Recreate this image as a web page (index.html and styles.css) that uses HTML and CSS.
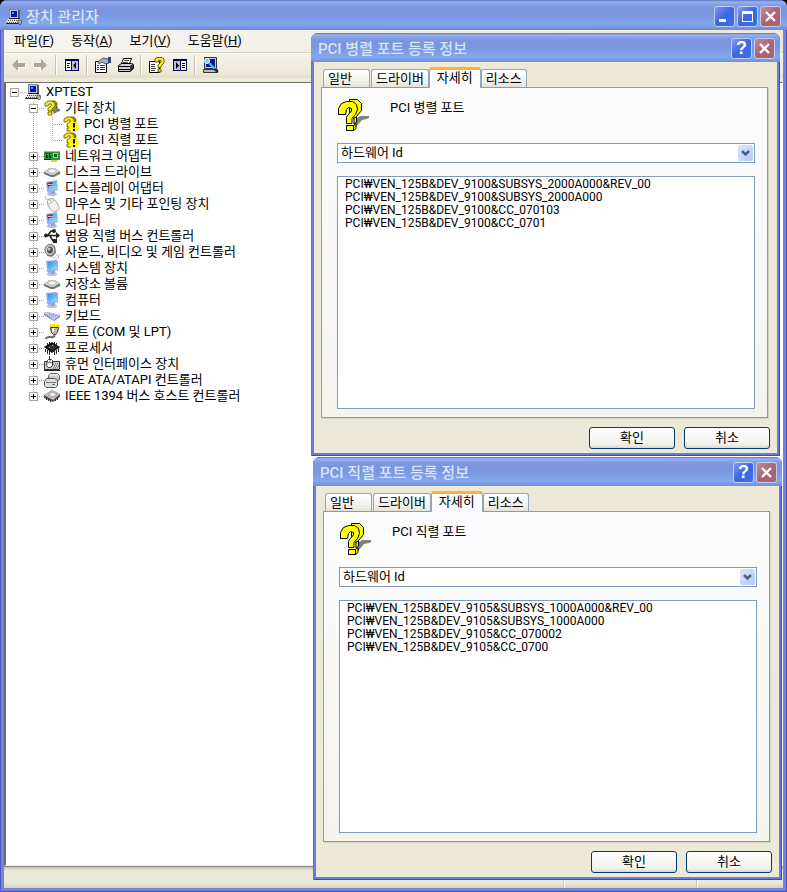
FILE: index.html
```html
<!DOCTYPE html>
<html lang="ko">
<head>
    <meta charset="UTF-8">
    <meta name="viewport" content="width=device-width, initial-scale=1.0">
    <title>장치 관리자</title>
    <link rel="stylesheet" href="styles.css">
</head>
<body>

<!-- 아이콘 모음 -->
<svg class="sprite" aria-hidden="true">
    <defs>
        <linearGradient id="screenFill" x1="0" y1="0" x2="1" y2="1">
            <stop offset="0" stop-color="#2a86ea"/>
            <stop offset=".5" stop-color="#5cbcf8"/>
            <stop offset="1" stop-color="#a8ecff"/>
        </linearGradient>
        <linearGradient id="metalFill" x1="0" y1="0" x2="0" y2="1">
            <stop offset="0" stop-color="#f4f4f4"/>
            <stop offset="1" stop-color="#9c9c9c"/>
        </linearGradient>
        <pattern id="hatch" width="2" height="2" patternUnits="userSpaceOnUse">
            <rect width="2" height="2" fill="#ffff00"/>
            <rect width="1" height="1" fill="#d8d8b0"/>
            <rect x="1" y="1" width="1" height="1" fill="#f0e890"/>
        </pattern>
    </defs>

    <symbol id="i-pc" viewBox="0 0 16 16">
        <path d="M3 0h10v10H3z" fill="#c8c8c8"/>
        <path d="M12 1h2v9h-2z" fill="#555"/>
        <path d="M3 0h10v1H3zM3 0h1v10H3z" fill="#888"/>
        <path d="M5 2h6v6H5z" fill="#0010c8"/>
        <path d="M6 3h2v2H6z" fill="#38a0ff"/>
        <path d="M3 9h11v1H3z" fill="#222"/>
        <path d="M2 10h12l1 3v1H0v-1z" fill="#e0e0e0"/>
        <path d="M2 11.5h10M1 13.500h11" stroke="#555" stroke-dasharray="1 1"/>
        <path d="M0 14h13v1H0z" fill="#222"/>
        <path d="M12 11h3l1 3-2 2-2-2z" fill="#aaa" stroke="#444" stroke-width=".7"/>
    </symbol>

    <symbol id="i-question" viewBox="0 0 16 16">
        <path d="M9 11l3-2V7h2v2h2v2l-3 1-3 2z" fill="#777"/>
        <path d="M8 1h3l2 2v4l-4 4H7z" fill="#a89800" stroke="#444000" stroke-width=".6"/>
        <path d="M1 6V3l3-2h4l3 2v3L8 9v2H4V8l3-2V4H5L4 6z" fill="#ffef00" stroke="#444000" stroke-width=".7"/>
        <path d="M4 12h4v3H4z" fill="#ffef00" stroke="#444000" stroke-width=".7"/>
    </symbol>

    <symbol id="i-warn" viewBox="0 0 16 16">
        <path d="M8 1h3l2 2v4l-4 4H7z" fill="#a89800" stroke="#444000" stroke-width=".6"/>
        <path d="M1 6V3l3-2h4l3 2v3L8 9v2H4V8l3-2V4H5L4 6z" fill="#ffe600" stroke="#444000" stroke-width=".7"/>
        <path d="M4 12h4v3H4z" fill="#ffef00" stroke="#444000" stroke-width=".7"/>
        <circle cx="11" cy="11" r="5" fill="#ffff00"/>
        <path d="M10 7h2v4l-1 1-1-1zM10 13h2v2h-2z" fill="#000"/>
    </symbol>

    <symbol id="i-net" viewBox="0 0 16 16">
        <path d="M0 4h16v8H0z" fill="#2a9636"/>
        <path d="M0 3h16v1H0z" fill="#8cc88c"/>
        <path d="M2 5h2v5H2zM5 5h2v5H5z" fill="#073f10"/>
        <path d="M3 6h1v1H3zM6 6h1v1H6z" fill="#8ecf8e"/>
        <path d="M9 5h5v5H9z" fill="#9cd49c"/>
        <path d="M10 6h3v3h-3z" fill="#0b5a18"/>
        <path d="M0 11h7v1H0z" fill="#063810"/>
        <path d="M7 12h6v2H7z" fill="#e8c840"/>
    </symbol>

    <symbol id="i-disk" viewBox="0 0 16 16">
        <path d="M0 8l5-4h6l5 4v2l-6 3H7L0 10z" fill="#6f6f6f"/>
        <path d="M0 8l5-4h6l5 3-6 4H7z" fill="#cfcfcf"/>
        <ellipse cx="8" cy="7" rx="4" ry="2" fill="#f8f8f8" stroke="#999" stroke-width=".5"/>
        <path d="M12 10h1v1h-1z" fill="#5b5"/>
    </symbol>

    <symbol id="i-display" viewBox="0 0 16 16">
        <ellipse cx="8" cy="14" rx="5" ry="2" fill="#b8c0e0"/>
        <path d="M7 11h4v3H7z" fill="#98a4cc"/>
        <path d="M2 2l11-2 1 10-9 3-2-1z" fill="#a4b0d8"/>
        <path d="M3 3l9-2 1 8-8 2z" fill="url(#screenFill)"/>
        <path d="M3 3l5-1 1 3-5 2z" fill="#1d50b8"/>
        <path d="M4 4h5v1H4zM5 6h4v1H5z" fill="#e8b4a0"/>
    </symbol>

    <symbol id="i-computer" viewBox="0 0 16 16">
        <ellipse cx="8" cy="14" rx="5" ry="2" fill="#b8c0e4"/>
        <path d="M7 11h4v3H7z" fill="#98a4d0"/>
        <path d="M2 1l10-1 2 1v9l-9 3-2-1z" fill="#98aae0"/>
        <path d="M4 2l8-1 1 8-8 2z" fill="url(#screenFill)"/>
    </symbol>

    <symbol id="i-mouse" viewBox="0 0 16 16">
        <path d="M2 0c-2 2 0 4 4 4" fill="none" stroke="#aaa"/>
        <path d="M4 4c3-3 7-1 9 3 2 3 3 6 0 8-3 1-6 0-8-4-2-3-2-5-1-7z" fill="#f2f2f2" stroke="#a0a0a0"/>
        <path d="M4 8c2 0 5-2 6-4M7 6L6 3" fill="none" stroke="#b8b8b8"/>
    </symbol>

    <symbol id="i-usb" viewBox="0 0 16 16">
        <path d="M2 7.500h11M4 7l3-4h3M6 8l3 5h3" fill="none" stroke="#222" stroke-width="1.600"/>
        <circle cx="2" cy="7.500" r="2" fill="#222"/>
        <path d="M12 4l4 3.500-4 3.500z" fill="#222"/>
        <circle cx="10" cy="3" r="2" fill="#222"/>
        <path d="M9 11h4v4H9z" fill="#222"/>
    </symbol>

    <symbol id="i-sound" viewBox="0 0 16 16">
        <path d="M2 2l5-2 4 2 1 7-4 4-5-1z" fill="#8a8a8a"/>
        <ellipse cx="6" cy="6" rx="5" ry="5.500" fill="#d4d4d4" stroke="#6a6a6a"/>
        <ellipse cx="6" cy="6" rx="3" ry="3.500" fill="#555"/>
        <circle cx="5" cy="5" r="1.500" fill="#ccc"/>
        <path d="M9 14c2 0 4-2 4-4M11 16c3-1 4-4 4-6" fill="none" stroke="#9aa6e8" stroke-width=".8"/>
    </symbol>

    <symbol id="i-keyboard" viewBox="0 0 16 16">
        <path d="M0 5l3-1 13 3v2l-6 4-2-1-8-5z" fill="#8088b8"/>
        <path d="M0 5l3-1 13 3-6 5-2-1z" fill="#c6ccf0"/>
        <path d="M3 6l9 3M3 8l7 2M5 5l9 3" stroke="#7078b0" stroke-width=".8" stroke-dasharray="1 1"/>
    </symbol>

    <symbol id="i-port" viewBox="0 0 16 16">
        <path d="M6 0h9v3H6z" fill="#f0e000"/>
        <path d="M7 0h1v1H7zM9 0h1v1H9zM11 0h1v1h-1zM13 0h1v1h-1z" fill="#fff"/>
        <path d="M6.500 3.500h8l-1 5-2 2h-2l-2-2z" fill="#b8b8b8" stroke="#333"/>
        <path d="M8 4h2v4H8z" fill="#f4f4f4"/>
        <path d="M10.500 11c0 3-3 2-5 2s-3 0-4 2" fill="none" stroke="#333" stroke-width="2"/>
        <path d="M10.500 11c0 3-3 2-5 2s-3 0-4 2" fill="none" stroke="#ddd" stroke-width=".7"/>
    </symbol>

    <symbol id="i-cpu" viewBox="0 0 16 16">
        <path d="M0 7l8-5 8 5-8 6z" fill="#111"/>
        <path d="M4 7l4-3 5 3-5 3z" fill="#333"/>
        <path d="M1.500 9v3M3.500 10v4M5.500 11v4M10.500 11v4M12.500 10v4M14.500 8v4M3.500 3v2M5.500 2v2M10.500 2v2M12.500 3v2" stroke="#222"/>
        <path d="M5 7h1v1H5zM8 5h1v1H8z" fill="#bbb"/>
    </symbol>

    <symbol id="i-hid" viewBox="0 0 16 16">
        <path d="M.5 5.500h15v8H.5z" fill="#ccc" stroke="#333"/>
        <path d="M9 8h6M10 10h5M9 12h6" stroke="#555" stroke-dasharray="1 1"/>
        <path d="M0 14h16v1H0z" fill="#222"/>
        <path d="M5.500 0v3M3.500 4.500l1-1h3l1 1v5l-2 2h-2l-2-2z" fill="#fff" stroke="#333"/>
        <path d="M4 6.500h4M6 4v2" stroke="#777"/>
    </symbol>

    <symbol id="i-ide" viewBox="0 0 16 16">
        <path d="M4.500 3.500l2-2h7l2 2v4l-2 2h-9z" fill="url(#metalFill)" stroke="#666"/>
        <path d="M.5 9.500l2-3h8l3 2v5l-2 2h-9l-2-2z" fill="#dedede" stroke="#555"/>
        <path d="M2 10h10v1H2z" fill="#777"/>
        <path d="M8 12h3v1H8z" fill="#484"/>
    </symbol>

    <symbol id="i-1394" viewBox="0 0 16 16">
        <path d="M0 7l8-5 8 4v3l-7 5-9-4z" fill="#555"/>
        <path d="M0 7l8-5 8 4-7 6z" fill="#c0c0c0"/>
        <path d="M4 7l4-3 5 2-4 3z" fill="#eee" stroke="#888" stroke-width=".7"/>
        <path d="M2.500 9v3M4.500 10v3M6.500 11v3M11.500 11v2M13.500 9v3" stroke="#333"/>
    </symbol>

    <symbol id="i-question-big" viewBox="0 0 32 32">
        <path d="M18 20l4-3h9v2l-2 1-5 1-6 7z" fill="#808080"/>
        <path d="M11.500.5h8l4 4v7l-5 6v2h-3l-4-6z" fill="url(#hatch)" stroke="#000"/>
        <path d="M16 19l2.500-1v5l-2.500 2z" fill="url(#hatch)" stroke="#000"/>
        <path d="M.5 15.500v-6l3-5 5-2h6l4 3 1 5-2 5-3.500 4v5H8.500v-6l1-2 4-4.500V9.500l-3-1-2 2-1 5z" fill="#ffff00" stroke="#000"/>
        <path d="M8.500 26.500h7v5h-7z" fill="#ffff00" stroke="#000"/>
        <path d="M15.500 26.500l2.500-2v5l-2.500 2z" fill="url(#hatch)" stroke="#000"/>
    </symbol>

    <symbol id="i-back" viewBox="0 0 16 16">
        <path d="M2 8l6-6v4h7v4H8v4z" fill="#fff" transform="translate(1 1)"/>
        <path d="M2 8l6-6v4h7v4H8v4z" fill="#aca899"/>
    </symbol>

    <symbol id="i-pane-left" viewBox="0 0 16 16">
        <path d="M1 2h14v12H1z" fill="#00005c"/>
        <path d="M2 4h5v9H2z" fill="#fff"/>
        <path d="M8 4h6v9H8z" fill="#c0c0cc"/>
        <path d="M3 6h3v1H3zM3 8h2v1H3zM3 10h3v1H3z" fill="#000"/>
        <path d="M12 5v7L9 8.500z" fill="#000"/>
    </symbol>

    <symbol id="i-pane-right" viewBox="0 0 16 16">
        <path d="M1 2h14v12H1z" fill="#00005c"/>
        <path d="M9 4h5v9H9z" fill="#fff"/>
        <path d="M2 4h6v9H2z" fill="#c0c0cc"/>
        <path d="M10 6h3v1h-3zM10 8h3v1h-3zM10 10h3v1h-3z" fill="#000"/>
        <path d="M4 5v7l3-3.500z" fill="#000"/>
    </symbol>

    <symbol id="i-props" viewBox="0 0 16 16">
        <path d="M.5 4.500h11v11H.5z" fill="#fff" stroke="#000"/>
        <path d="M2 8.500h2M5 8.500h5M2 10.500h2M5 10.500h5M2 12.500h2M5 12.500h5" stroke="#333"/>
        <path d="M4 4l4-3 5 1 1-1v5l-4 1-3-2-3 2-1-2z" fill="#a8b0c0" stroke="#333" stroke-width=".8"/>
        <path d="M13 0h3v6h-3z" fill="#304878"/>
    </symbol>

    <symbol id="i-print" viewBox="0 0 16 16">
        <path d="M5.500 1.500h8l-2 5h-8z" fill="#fff" stroke="#000"/>
        <path d="M6 3.500h5M5 5.500h5" stroke="#444"/>
        <path d="M.5 8.500l3-2h10l2 1v4l-3 3H.5z" fill="#ccc" stroke="#000"/>
        <path d="M1 9.500h11l3-2M1 12.500h11" fill="none" stroke="#000"/>
        <path d="M9 10h2v1H9z" fill="#e8d800"/>
        <path d="M12 9l3-2v5l-3 3z" fill="#333"/>
    </symbol>

    <symbol id="i-help-doc" viewBox="0 0 16 16">
        <path d="M.5 4.500h10v11H.5z" fill="#fff" stroke="#000"/>
        <path d="M2 7.500h4M2 9.500h4M2 11.500h5M2 13.500h4" stroke="#333"/>
        <path d="M6 5V2l2-1.500h5l2 1.500v4l-3 3v1.500H9V8l3-3V3.500H9.500V5z" fill="#ffef00" stroke="#443c00" stroke-width=".8"/>
        <path d="M9 12h3v3H9z" fill="#ffef00" stroke="#443c00" stroke-width=".8"/>
    </symbol>

    <symbol id="i-scan" viewBox="0 0 16 16">
        <path d="M1.500.5h12v11h-12z" fill="#c8c8c8" stroke="#333"/>
        <path d="M3 2h9v8H3z" fill="#0018a8"/>
        <path d="M.5 12.500h14v3H.5z" fill="#bbb" stroke="#333"/>
        <circle cx="4" cy="4" r="2.500" fill="#60d8ff" stroke="#e8ffff"/>
        <path d="M6 6l6 6" stroke="#40c8f0" stroke-width="2"/>
        <path d="M11 12l4 3" stroke="#102060" stroke-width="2"/>
    </symbol>

    <symbol id="i-cross" viewBox="0 0 19 19">
        <path d="M5 5l9 9M14 5l-9 9" stroke="#fff" stroke-width="2.400"/>
    </symbol>

    <symbol id="i-chevron" viewBox="0 0 15 16">
        <path d="M4 6l3.500 3.500L11 6" fill="none" stroke="#4d6185" stroke-width="2.600"/>
    </symbol>
</svg>

<main class="window">
    <header class="titlebar">
        <svg class="icon"><use href="#i-pc"/></svg>
        <h1 class="title">장치 관리자</h1>
        <div class="controls">
            <button class="control" aria-label="최소화">
                <svg viewBox="0 0 19 19"><path d="M4 12h7v3H4z" fill="#fff"/></svg>
            </button>
            <button class="control" aria-label="최대화">
                <svg viewBox="0 0 19 19"><path d="M4 4h11v11H4zM5 7v7h9V7z" fill="#fff" fill-rule="evenodd"/></svg>
            </button>
            <button class="control close" aria-label="닫기"><svg><use href="#i-cross"/></svg></button>
        </div>
    </header>

    <nav class="menubar">
        <button>파일(<u>F</u>)</button>
        <button>동작(<u>A</u>)</button>
        <button>보기(<u>V</u>)</button>
        <button>도움말(<u>H</u>)</button>
    </nav>

    <div class="toolbar">
        <button disabled aria-label="뒤로"><svg class="icon"><use href="#i-back"/></svg></button>
        <button disabled aria-label="앞으로"><svg class="icon flip"><use href="#i-back"/></svg></button>
        <span class="separator"></span>
        <button aria-label="콘솔 트리"><svg class="icon"><use href="#i-pane-left"/></svg></button>
        <span class="separator"></span>
        <button aria-label="속성"><svg class="icon"><use href="#i-props"/></svg></button>
        <button aria-label="인쇄"><svg class="icon"><use href="#i-print"/></svg></button>
        <span class="separator"></span>
        <button aria-label="도움말"><svg class="icon"><use href="#i-help-doc"/></svg></button>
        <button aria-label="작업 창"><svg class="icon"><use href="#i-pane-right"/></svg></button>
        <span class="separator"></span>
        <button aria-label="하드웨어 변경 사항 검색"><svg class="icon"><use href="#i-scan"/></svg></button>
    </div>

    <section class="tree-pane">
        <ul class="tree">
            <li>
                <div class="node"><button class="toggle open" aria-label="축소"></button><svg class="icon"><use href="#i-pc"/></svg>XPTEST</div>
                <ul>
                    <li>
                        <div class="node"><button class="toggle open" aria-label="축소"></button><svg class="icon"><use href="#i-question"/></svg>기타 장치</div>
                        <ul>
                            <li><div class="node leaf"><svg class="icon"><use href="#i-warn"/></svg>PCI 병렬 포트</div></li>
                            <li><div class="node leaf"><svg class="icon"><use href="#i-warn"/></svg>PCI 직렬 포트</div></li>
                        </ul>
                    </li>
                    <li><div class="node"><button class="toggle" aria-label="확장"></button><svg class="icon"><use href="#i-net"/></svg>네트워크 어댑터</div></li>
                    <li><div class="node"><button class="toggle" aria-label="확장"></button><svg class="icon"><use href="#i-disk"/></svg>디스크 드라이브</div></li>
                    <li><div class="node"><button class="toggle" aria-label="확장"></button><svg class="icon"><use href="#i-display"/></svg>디스플레이 어댑터</div></li>
                    <li><div class="node"><button class="toggle" aria-label="확장"></button><svg class="icon"><use href="#i-mouse"/></svg>마우스 및 기타 포인팅 장치</div></li>
                    <li><div class="node"><button class="toggle" aria-label="확장"></button><svg class="icon"><use href="#i-display"/></svg>모니터</div></li>
                    <li><div class="node"><button class="toggle" aria-label="확장"></button><svg class="icon"><use href="#i-usb"/></svg>범용 직렬 버스 컨트롤러</div></li>
                    <li><div class="node"><button class="toggle" aria-label="확장"></button><svg class="icon"><use href="#i-sound"/></svg>사운드, 비디오 및 게임 컨트롤러</div></li>
                    <li><div class="node"><button class="toggle" aria-label="확장"></button><svg class="icon"><use href="#i-computer"/></svg>시스템 장치</div></li>
                    <li><div class="node"><button class="toggle" aria-label="확장"></button><svg class="icon"><use href="#i-disk"/></svg>저장소 볼륨</div></li>
                    <li><div class="node"><button class="toggle" aria-label="확장"></button><svg class="icon"><use href="#i-computer"/></svg>컴퓨터</div></li>
                    <li><div class="node"><button class="toggle" aria-label="확장"></button><svg class="icon"><use href="#i-keyboard"/></svg>키보드</div></li>
                    <li><div class="node"><button class="toggle" aria-label="확장"></button><svg class="icon"><use href="#i-port"/></svg>포트 (COM 및 LPT)</div></li>
                    <li><div class="node"><button class="toggle" aria-label="확장"></button><svg class="icon"><use href="#i-cpu"/></svg>프로세서</div></li>
                    <li><div class="node"><button class="toggle" aria-label="확장"></button><svg class="icon"><use href="#i-hid"/></svg>휴먼 인터페이스 장치</div></li>
                    <li><div class="node"><button class="toggle" aria-label="확장"></button><svg class="icon"><use href="#i-ide"/></svg>IDE ATA/ATAPI 컨트롤러</div></li>
                    <li><div class="node"><button class="toggle" aria-label="확장"></button><svg class="icon"><use href="#i-1394"/></svg>IEEE 1394 버스 호스트 컨트롤러</div></li>
                </ul>
            </li>
        </ul>
    </section>

    <footer class="statusbar">
        <span class="status-text"></span>
        <span class="status-cell wide"></span>
        <span class="status-cell"></span>
    </footer>
</main>

<section class="dialog parallel">
    <header class="titlebar">
        <h2 class="title">PCI 병렬 포트 등록 정보</h2>
        <div class="controls">
            <button class="control help" aria-label="도움말">?</button>
            <button class="control close" aria-label="닫기"><svg><use href="#i-cross"/></svg></button>
        </div>
    </header>
    <div class="dialog-body">
        <div class="tabs" role="tablist">
            <button class="tab" role="tab">일반</button>
            <button class="tab" role="tab">드라이버</button>
            <button class="tab active" role="tab" aria-selected="true">자세히</button>
            <button class="tab" role="tab">리소스</button>
        </div>
        <div class="tab-panel">
            <div class="device">
                <svg class="device-icon"><use href="#i-question-big"/></svg>
                <label for="parallelProperty">PCI 병렬 포트</label>
            </div>
            <div class="combo">
                <select id="parallelProperty">
                    <option>하드웨어 Id</option>
                </select>
                <svg class="combo-arrow"><use href="#i-chevron"/></svg>
            </div>
            <select class="id-list" size="4" aria-label="하드웨어 Id">
                <option>PCI₩VEN_125B&amp;DEV_9100&amp;SUBSYS_2000A000&amp;REV_00</option>
                <option>PCI₩VEN_125B&amp;DEV_9100&amp;SUBSYS_2000A000</option>
                <option>PCI₩VEN_125B&amp;DEV_9100&amp;CC_070103</option>
                <option>PCI₩VEN_125B&amp;DEV_9100&amp;CC_0701</option>
            </select>
        </div>
        <div class="actions">
            <button class="push">확인</button>
            <button class="push">취소</button>
        </div>
    </div>
</section>

<section class="dialog serial">
    <header class="titlebar">
        <h2 class="title">PCI 직렬 포트 등록 정보</h2>
        <div class="controls">
            <button class="control help" aria-label="도움말">?</button>
            <button class="control close" aria-label="닫기"><svg><use href="#i-cross"/></svg></button>
        </div>
    </header>
    <div class="dialog-body">
        <div class="tabs" role="tablist">
            <button class="tab" role="tab">일반</button>
            <button class="tab" role="tab">드라이버</button>
            <button class="tab active" role="tab" aria-selected="true">자세히</button>
            <button class="tab" role="tab">리소스</button>
        </div>
        <div class="tab-panel">
            <div class="device">
                <svg class="device-icon"><use href="#i-question-big"/></svg>
                <label for="serialProperty">PCI 직렬 포트</label>
            </div>
            <div class="combo">
                <select id="serialProperty">
                    <option>하드웨어 Id</option>
                </select>
                <svg class="combo-arrow"><use href="#i-chevron"/></svg>
            </div>
            <select class="id-list" size="4" aria-label="하드웨어 Id">
                <option>PCI₩VEN_125B&amp;DEV_9105&amp;SUBSYS_1000A000&amp;REV_00</option>
                <option>PCI₩VEN_125B&amp;DEV_9105&amp;SUBSYS_1000A000</option>
                <option>PCI₩VEN_125B&amp;DEV_9105&amp;CC_070002</option>
                <option>PCI₩VEN_125B&amp;DEV_9105&amp;CC_0700</option>
            </select>
        </div>
        <div class="actions">
            <button class="push">확인</button>
            <button class="push">취소</button>
        </div>
    </div>
</section>

</body>
</html>
```

FILE: styles.css
```css
* {
    margin: 0;
    padding: 0;
    box-sizing: border-box;
}

body {
    position: relative;
    background: #000;
    color: #000;
    font: 13px/16px Roboto, "Noto Sans CJK KR", sans-serif;
}

button,
select {
    font: inherit;
    color: inherit;
    border: 0;
    border-radius: 0;
    background: none;
}

ul {
    list-style: none;
}

.sprite {
    position: absolute;
    width: 0;
    height: 0;
}

.icon {
    display: block;
    flex: none;
    width: 16px;
    height: 16px;
}

.flip {
    transform: scaleX(-1);
}

/* 창 */
.window {
    display: flex;
    flex-direction: column;
    min-height: 100vh;
    padding: 0 4px 4px;
    background: #7484dc;
    border-radius: 7px 7px 0 0;
    box-shadow: inset 1px 0 #5058c8, inset -1px -1px #4850b8;
    overflow: hidden;
}

.titlebar {
    display: flex;
    align-items: center;
    height: 30px;
    margin: 0 -4px;
    padding: 3px 6px 0;
    background: linear-gradient(#5c74cc 0, #9cb4ee 2px, #88a2e6 4px, #7a96df 8px, #7a96df 14px, #82a8ea 24px, #7c98e2 27px, #7086d8 30px);
}

.title {
    flex: 1;
    margin-left: 4px;
    color: #d8e4f8;
    font-size: 15px;
    font-weight: 500;
    line-height: 20px;
}

.controls {
    display: flex;
    gap: 2px;
}

.control {
    width: 21px;
    height: 21px;
    border: 1px solid #c0ccf2;
    border-radius: 3px;
    background: linear-gradient(135deg, #7c9cf0, #3c66e0 50%, #3a70ee);
    color: #fff;
    font: bold 18px/19px "Liberation Sans", sans-serif;
}

.control svg {
    display: block;
    width: 19px;
    height: 19px;
}

.control.close {
    background: linear-gradient(135deg, #c08c9c, #ac6474 50%, #b06070);
}

/* 메뉴와 도구 모음 */
.menubar {
    display: flex;
    gap: 17px;
    padding: 3px 10px;
    border-bottom: 1px solid #d8d2bd;
    background: linear-gradient(90deg, #f6f5f2, #ece9d8);
}

.toolbar {
    display: flex;
    align-items: center;
    height: 29px;
    padding: 0 2px 6px;
    border-top: 1px solid #fff;
    background: linear-gradient(#f4f3ea, #ece9d8 20px, #e0dcc8 23px, #ece9d8 24px);
}

.toolbar button {
    display: flex;
    align-items: center;
    justify-content: center;
    width: 23px;
    height: 22px;
}

.separator {
    width: 2px;
    height: 20px;
    margin: 0 3px;
    border-left: 1px solid #c5c2b2;
    border-right: 1px solid #fff;
}

/* 장치 트리 */
.tree-pane {
    flex: 1;
    border: 1px solid #716f64;
    border-left-width: 2px;
    border-right-color: #fff;
    border-bottom-color: #f1efe2;
    background: #fff;
}

.tree {
    padding: 1px 0 0 4px;
}

.tree ul {
    padding-left: 19px;
}

.tree ul > li {
    background: repeating-linear-gradient(#fff 0 1px, #aca899 1px 2px) 4px 0 / 1px 100% no-repeat;
}

.tree ul > li:last-child {
    background-size: 1px 9px;
}

.node {
    display: flex;
    align-items: center;
    height: 16px;
    white-space: nowrap;
}

.node .icon {
    margin-right: 5px;
}

/* 노드 앞의 점선 */
.node::before {
    content: "";
    width: 6px;
    height: 1px;
    background: repeating-linear-gradient(90deg, #fff 0 1px, #aca899 1px 2px);
}

.node .toggle {
    order: -1;
}

.node.leaf::before {
    width: 11px;
    margin-left: 4px;
}

.toggle {
    width: 9px;
    height: 9px;
    border: 1px solid #aca899;
    background:
        linear-gradient(#000, #000) center / 5px 1px no-repeat,
        linear-gradient(#000, #000) center / 1px 5px no-repeat,
        #fff;
}

.toggle.open {
    background: linear-gradient(#000, #000) center / 5px 1px no-repeat, #fff;
}

/* 상태 표시줄 */
.statusbar {
    display: flex;
    height: 22px;
    padding: 3px 2px 1px 0;
    border-top: 1px solid #8c8a7c;
    background: linear-gradient(#c8c4b4, #ece9d8 4px, #ece9d8 15px, #d8d4c0);
}

.status-text {
    flex: 1;
}

.status-cell {
    width: 85px;
    border-left: 1px solid #c5c2b2;
    box-shadow: inset 1px 0 #fff;
}

.status-cell.wide {
    width: 133px;
}

/* 등록 정보 대화 상자 */
.dialog {
    position: absolute;
    width: 469px;
    padding: 0 3px 3px;
    border-radius: 7px 7px 0 0;
    background: #6c7cdc;
    box-shadow: inset 1px 0 #6470d4, inset -1px -1px #4848a8;
    overflow: hidden;
}

.dialog.parallel {
    top: 33px;
    right: 7px;
}

.dialog.serial {
    top: 457px;
    right: 5px;
}

.dialog .titlebar {
    height: 29px;
    margin: 0 -3px;
    padding: 2px 5px 0 3px;
}

.dialog-body {
    padding: 5px 9px 4px 7px;
    background: #ece9d8;
}

.tabs {
    display: flex;
    align-items: flex-end;
    height: 20px;
    padding-left: 2px;
}

.tab {
    height: 18px;
    padding: 0 4px;
    border: 1px solid #91a7b4;
    border-bottom: 0;
    border-radius: 3px 3px 0 0;
    background: linear-gradient(#fff, #f0f0ea 70%, #e4e2d8);
    text-align: left;
    white-space: nowrap;
}

.tab:first-child {
    min-width: 47px;
    margin-right: 1px;
}

.tab.active {
    z-index: 1;
    height: 21px;
    margin-bottom: -1px;
    padding: 0 7px 3px;
    border-top: 3px solid #ffb030;
    background: #fcfcfe;
    line-height: 14px;
}

.tab-panel {
    padding: 11px 12px 8px 15px;
    border: 1px solid #919b9c;
    background: linear-gradient(#fcfcfe, #f4f3ee);
    box-shadow: 1px 1px #d4d0c0;
}

.device {
    display: flex;
    gap: 20px;
    margin-bottom: 12px;
    padding-left: 1px;
    line-height: 18px;
}

.device-icon {
    width: 32px;
    height: 32px;
}

.combo {
    position: relative;
    margin-bottom: 13px;
}

.combo select {
    display: block;
    width: 100%;
    height: 20px;
    padding: 0 3px;
    border: 1px solid #7f9db9;
    background: #fff;
    appearance: none;
}

.combo-arrow {
    position: absolute;
    top: 2px;
    right: 2px;
    width: 15px;
    height: 16px;
    border-radius: 2px;
    background: linear-gradient(135deg, #dce6fe, #b4c8f6);
    pointer-events: none;
}

.id-list {
    display: block;
    width: 100%;
    height: 233px;
    border: 1px solid #7f9db9;
    background: #fff;
    overflow: hidden;
}

.id-list option {
    height: 13px;
    min-height: 0;
    padding: 0 7px;
    font: 12px/13px Roboto, "Noto Sans CJK KR", sans-serif;
}

.actions {
    display: flex;
    justify-content: flex-end;
    gap: 9px;
    margin: 9px -2px 0 0;
}

.push {
    width: 86px;
    height: 22px;
    border: 1px solid #003c74;
    border-radius: 3px;
    background: linear-gradient(#fff, #f2f2ec 80%, #dcd8cc);
    line-height: 18px;
}
```
